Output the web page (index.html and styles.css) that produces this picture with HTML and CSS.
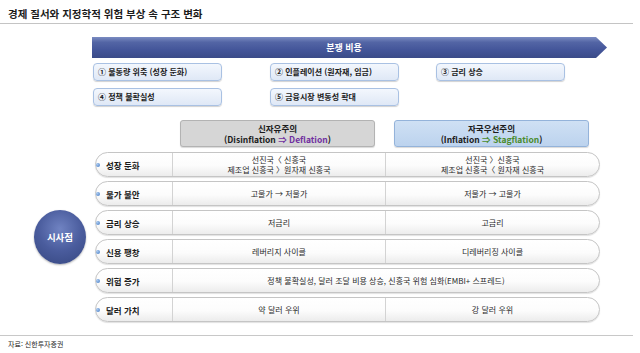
FILE: index.html
```html
<!DOCTYPE html>
<html lang="ko">
<head>
<meta charset="utf-8">
<title>경제 질서와 지정학적 위험 부상 속 구조 변화</title>
<link rel="stylesheet" href="styles.css">
</head>
<body>
<div class="page">
  <h1 class="title">경제 질서와 지정학적 위험 부상 속 구조 변화</h1>
  <div class="banner"><span>분쟁 비용</span></div>
  <div class="causes">
    <div class="cause">① 물동량 위축 (성장 둔화)</div>
    <div class="cause">② 인플레이션 (원자재, 임금)</div>
    <div class="cause">③ 금리 상승</div>
    <div class="cause">④ 정책 불확실성</div>
    <div class="cause">⑤ 금융시장 변동성 확대</div>
  </div>
  <div class="heads">
    <div class="head neo"><span>신자유주의</span><span>(Disinflation <em class="purple">⇒ Deflation</em>)</span></div>
    <div class="head nat"><span>자국우선주의</span><span>(Inflation <em class="green">⇒ Stagflation</em>)</span></div>
  </div>
  <div class="matrix">
    <div class="circle">시사점</div>
    <div class="rows">
      <div class="row">
        <div class="label">성장 둔화</div>
        <div class="cell">선진국〈 신흥국<br>제조업 신흥국 〉원자재 신흥국</div>
        <div class="cell">선진국 〉신흥국<br>제조업 신흥국〈 원자재 신흥국</div>
      </div>
      <div class="row">
        <div class="label">물가 불안</div>
        <div class="cell">고물가 → 저물가</div>
        <div class="cell">저물가 → 고물가</div>
      </div>
      <div class="row">
        <div class="label">금리 상승</div>
        <div class="cell">저금리</div>
        <div class="cell">고금리</div>
      </div>
      <div class="row">
        <div class="label">신용 팽창</div>
        <div class="cell">레버리지 사이클</div>
        <div class="cell">디레버리징 사이클</div>
      </div>
      <div class="row">
        <div class="label">위험 증가</div>
        <div class="cell span">정책 불확실성, 달러 조달 비용 상승, 신흥국 위험 심화(EMBI+ 스프레드)</div>
      </div>
      <div class="row">
        <div class="label">달러 가치</div>
        <div class="cell">약 달러 우위</div>
        <div class="cell">강 달러 우위</div>
      </div>
    </div>
  </div>
  <div class="source">자료: 신한투자증권</div>
</div>
</body>
</html>
```
FILE: styles.css
```css
* { box-sizing: border-box; margin: 0; padding: 0; }
body {
  margin: 0;
  width: 640px;
  height: 353px;
  overflow: hidden;
  background: #fff;
  font-family: "Noto Sans CJK KR", "Noto Sans", sans-serif;
  color: #1b1b1b;
}
.title {
  font-size: 10.5px;
  font-weight: 700;
  line-height: 1;
  height: 24px;
  width: 633px;
  padding: 8.5px 0 0 8px;
  border-bottom: 1px solid #c4c4c4;
}
.banner {
  margin: 13px 0 0 92px;
  width: 515px;
  height: 21px;
  background: linear-gradient(#7b8cc2 0%, #5365a5 25%, #44569a 60%, #3a4b88 100%);
  clip-path: polygon(0 0, calc(100% - 11px) 0, 100% 50%, calc(100% - 11px) 100%, 0 100%);
  color: #fff;
  font-size: 9px;
  font-weight: 700;
  line-height: 21px;
  text-align: center;
  padding-right: 11px;
}
.causes {
  margin: 5px 0 0 93px;
  display: grid;
  grid-template-columns: 177px 166px 128px;
  row-gap: 7px;
}
.cause {
  width: 129px;
  height: 18px;
  border: 1px solid #a9c1e3;
  border-radius: 4px;
  background: linear-gradient(#f3f7fd, #dfe8f6);
  box-shadow: 0 1px 1px rgba(0,0,0,0.18);
  font-size: 8px;
  font-weight: 700;
  line-height: 16px;
  padding-left: 4px;
  white-space: nowrap;
}
.heads {
  margin: 14px 0 0 180px;
  display: flex;
  gap: 19px;
}
.head {
  width: 195px;
  height: 27px;
  border-radius: 3px;
  display: flex;
  flex-direction: column;
  justify-content: center;
  align-items: center;
  font-size: 8.5px;
  font-weight: 700;
  line-height: 11px;
  box-shadow: 0 1px 1px rgba(0,0,0,0.15);
}
.head em { font-style: normal; }
.neo { background: #d6d6d6; border: 1px solid #b3b3b3; }
.nat { background: linear-gradient(#cfe0f4, #bcd3ee); border: 1px solid #94b3da; }
.purple { color: #7030a0; }
.green { color: #4a8b2c; }
.matrix {
  margin-top: 5px;
  display: flex;
  align-items: center;
  padding-left: 34px;
}
.circle {
  width: 52px;
  height: 54px;
  border-radius: 50%;
  background: radial-gradient(circle at 50% 35%, #7083c2 0%, #4a5c9d 50%, #35467f 100%);
  box-shadow: 0 1px 2px rgba(0,0,0,0.3);
  color: #fff;
  font-size: 9.5px;
  font-weight: 700;
  display: flex;
  align-items: center;
  justify-content: center;
  margin-right: 9px;
}
.rows {
  display: flex;
  flex-direction: column;
  gap: 4px;
  width: 505px;
}
.row {
  position: relative;
  height: 25px;
  display: grid;
  grid-template-columns: 76px 213px 1fr;
  border: 1px solid #c5c5c5;
  border-radius: 13px;
  background: linear-gradient(#ffffff 0%, #fcfcfc 55%, #ececec 100%);
  box-shadow: 0 1px 1px rgba(0,0,0,0.12);
}
.label {
  position: relative;
  font-size: 8.5px;
  font-weight: 700;
  display: flex;
  align-items: center;
  padding-left: 10px;
}
.label::before {
  content: "";
  position: absolute;
  left: 0;
  top: 10px;
  width: 4px;
  height: 4px;
  border-radius: 50%;
  background: radial-gradient(circle at 35% 35%, #a9c8ee, #3f78c4);
}
.cell {
  border-left: 1px solid #d3d3d3;
  font-size: 8px;
  line-height: 10px;
  color: #2a2a2a;
  display: flex;
  align-items: center;
  justify-content: center;
  text-align: center;
}
.cell.span { grid-column: 2 / 4; }
.source {
  margin-top: 13px;
  width: 633px;
  border-top: 1px solid #c8c8c8;
  padding: 5px 0 0 8px;
  font-size: 7px;
  line-height: 1;
  color: #222;
}
```
